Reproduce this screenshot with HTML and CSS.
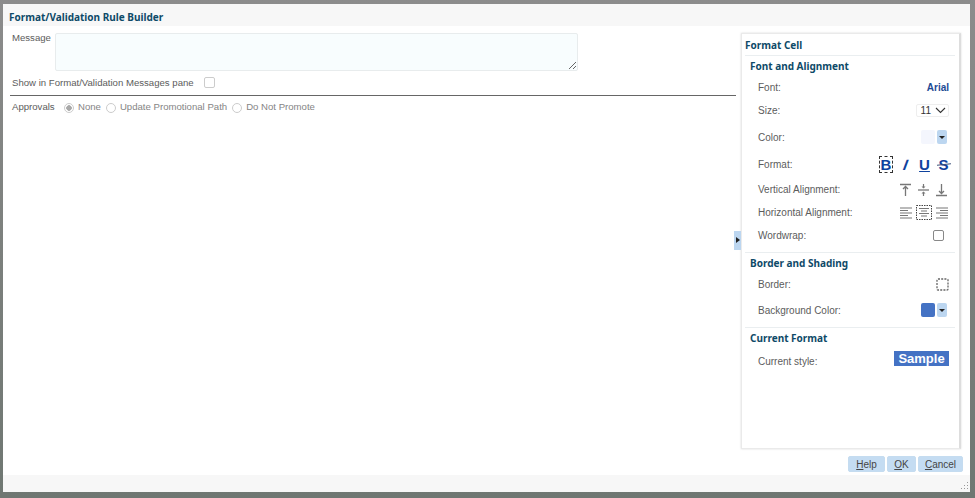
FILE: index.html
```html
<!DOCTYPE html>
<html lang="en">
<head>
    <meta charset="UTF-8">
    <title>Format/Validation Rule Builder</title>
    <link rel="stylesheet" href="styles.css">
</head>
<body>
    <div class="dialog">
        <div class="title-bar">Format/Validation Rule Builder</div>

        <div class="dialog-body">
            <div class="rule-form">
                <div class="message-row">
                    <label class="message-label">Message</label>
                    <div class="message-box">
                        <svg class="grip" width="9" height="9" viewBox="0 0 9 9">
                            <path d="M1 8 L8 1 M5 8 L8 5" stroke="#666" stroke-width="1" fill="none"/>
                        </svg>
                    </div>
                </div>
                <div class="pane-row">
                    <span>Show in Format/Validation Messages pane</span>
                    <span class="check check-muted"></span>
                </div>
                <div class="approvals-row">
                    <span class="approvals-label">Approvals</span>
                    <span class="radio radio-on"></span><span class="muted radio-text">None</span>
                    <span class="radio"></span><span class="muted radio-text">Update Promotional Path</span>
                    <span class="radio"></span><span class="muted">Do Not Promote</span>
                </div>
            </div>

            <div class="collapse-handle"></div>

            <div class="format-panel">
                <h2 class="panel-title">Format Cell</h2>

                <div class="section section-font">
                    <h3>Font and Alignment</h3>
                    <div class="row row-font">
                        <span>Font:</span>
                        <span class="font-name">Arial</span>
                    </div>
                    <div class="row row-size">
                        <span>Size:</span>
                        <span class="size-select">11
                            <svg width="11" height="7" viewBox="0 0 11 7"><path d="M1 1 L5.5 5.5 L10 1" stroke="#333" stroke-width="1.1" fill="none"/></svg>
                        </span>
                    </div>
                    <div class="row row-color">
                        <span>Color:</span>
                        <span class="color-pick">
                            <span class="swatch swatch-white"></span>
                            <span class="drop"></span>
                        </span>
                    </div>
                    <div class="row row-format">
                        <span>Format:</span>
                        <span class="icons icons-format">
                            <span class="fmt fmt-b">B</span>
                            <span class="fmt fmt-i">I</span>
                            <span class="fmt fmt-u">U</span>
                            <span class="fmt fmt-s">S</span>
                        </span>
                    </div>
                    <div class="row row-valign">
                        <span>Vertical Alignment:</span>
                        <span class="icons">
                            <svg width="13" height="14" viewBox="0 0 13 14"><path d="M1 1.5 H12 M6.5 13 V3 M4 6 L6.5 3.5 L9 6" stroke="#777" stroke-width="1.3" fill="none"/></svg>
                            <svg width="13" height="14" viewBox="0 0 13 14"><path d="M1 7 H12" stroke="#777" stroke-width="1.3"/><path d="M6.5 1 V5 M6.5 9 V13" stroke="#777" stroke-width="1.2"/><path d="M4.5 3.5 L6.5 5.5 L8.5 3.5 Z M4.5 10.5 L6.5 8.5 L8.5 10.5 Z" fill="#777"/></svg>
                            <svg width="13" height="14" viewBox="0 0 13 14"><path d="M1 12.5 H12 M6.5 1 V11 M4 8 L6.5 10.5 L9 8" stroke="#777" stroke-width="1.3" fill="none"/></svg>
                        </span>
                    </div>
                    <div class="row row-halign">
                        <span>Horizontal Alignment:</span>
                        <span class="icons icons-halign">
                            <svg width="14" height="14" viewBox="0 0 14 14"><path d="M1 2 H13 M1 4.5 H9 M1 7 H13 M1 9.5 H9 M1 12 H13" stroke="#777" stroke-width="1.2"/></svg>
                            <svg width="16" height="15" viewBox="0 0 16 15"><rect x="0.5" y="0.5" width="15" height="14" fill="none" stroke="#444" stroke-dasharray="1.5 1"/><path d="M3 3.5 H13 M5 6 H11 M3 8.5 H13 M5 11 H11" stroke="#777" stroke-width="1.2"/></svg>
                            <svg width="14" height="14" viewBox="0 0 14 14"><path d="M1 2 H13 M5 4.5 H13 M1 7 H13 M5 9.5 H13 M1 12 H13" stroke="#777" stroke-width="1.2"/></svg>
                        </span>
                    </div>
                    <div class="row row-wrap">
                        <span>Wordwrap:</span>
                        <span class="check"></span>
                    </div>
                </div>

                <div class="section section-border">
                    <h3>Border and Shading</h3>
                    <div class="row row-border">
                        <span>Border:</span>
                        <svg width="13" height="13" viewBox="0 0 13 13"><rect x="1" y="1" width="11" height="11" rx="1" fill="none" stroke="#666" stroke-width="1.3" stroke-dasharray="2 1.2"/></svg>
                    </div>
                    <div class="row row-bg">
                        <span>Background Color:</span>
                        <span class="color-pick">
                            <span class="swatch swatch-blue"></span>
                            <span class="drop"></span>
                        </span>
                    </div>
                </div>

                <div class="section">
                    <h3>Current Format</h3>
                    <div class="row row-style">
                        <span>Current style:</span>
                        <span class="sample">Sample</span>
                    </div>
                </div>
            </div>
        </div>

        <div class="button-row">
            <button class="btn btn-help"><u>H</u>elp</button>
            <button class="btn btn-ok"><u>O</u>K</button>
            <button class="btn btn-cancel"><u>C</u>ancel</button>
        </div>

        <div class="status-bar">
            <svg class="resize-grip" width="10" height="10" viewBox="0 0 10 10">
                <path d="M8 1h1v1H8z M5 4h1v1H5z M8 4h1v1H8z M2 7h1v1H2z M5 7h1v1H5z M8 7h1v1H8z" fill="#999"/>
            </svg>
        </div>
    </div>
</body>
</html>
```

FILE: styles.css
```css
* {
    margin: 0;
    padding: 0;
    box-sizing: border-box;
}

body {
    width: 975px;
    height: 498px;
    overflow: hidden;
    background: linear-gradient(#8c8c8c 0%, #7c807d 50%, #6f7772 100%);
    font-family: 'Liberation Sans', 'DejaVu Sans', sans-serif;
    font-size: 10px;
    color: #5c5c5c;
    padding: 4px 5px 6px 3px;
}

.dialog {
    height: 488px;
    background: white;
    display: flex;
    flex-direction: column;
    position: relative;
}

.title-bar {
    height: 22px;
    line-height: 26px;
    padding-left: 6px;
    background: #f7f7f7;
    color: #0e4a68;
    font-family: 'Noto Sans', sans-serif;
    font-weight: bold;
    flex: none;
}

.dialog-body {
    flex: none;
    height: 422px;
    display: flex;
    position: relative;
}

.rule-form {
    width: 738px;
    padding: 7px 0 0 9px;
    flex: none;
    font-size: 9.6px;
}

.message-row {
    display: flex;
}

.message-label {
    width: 43px;
    line-height: 10px;
}

.message-box {
    width: 523px;
    height: 38px;
    background: #f8fdfe;
    border: 1px solid #e8eced;
    border-radius: 2px;
    position: relative;
}

.grip {
    position: absolute;
    right: 0;
    bottom: 0;
}

.pane-row {
    display: flex;
    align-items: center;
    gap: 10px;
    height: 25px;
    border-bottom: 1px solid #666;
    width: 726px;
    margin-left: -2px;
    padding-left: 2px;
    padding-bottom: 2px;
}

.approvals-row {
    display: flex;
    align-items: center;
    height: 20px;
}

.approvals-label {
    width: 52px;
}

.muted {
    color: #858585;
}

.radio {
    width: 10px;
    height: 10px;
    border: 1px solid #ccc;
    border-radius: 50%;
    background: white;
    margin-top: 3px;
    margin-right: 4px;
    flex: none;
}

.radio-on {
    background: radial-gradient(circle, #a9a9a9 0 2.5px, white 3px);
}

.radio-text {
    margin-right: 5px;
}

.check {
    width: 11px;
    height: 11px;
    border: 1px solid #888;
    border-radius: 2px;
    background: white;
    display: block;
}

.check-muted {
    border-color: #ccc;
}

.collapse-handle {
    position: absolute;
    left: 731px;
    top: 205px;
    width: 7px;
    height: 19px;
    background: #bcd6f0;
}

.collapse-handle::after {
    content: '';
    position: absolute;
    left: 2px;
    top: 6px;
    border-left: 4px solid #222;
    border-top: 3.5px solid transparent;
    border-bottom: 3.5px solid transparent;
}

.format-panel {
    width: 220px;
    height: 416px;
    margin-top: 7px;
    background: white;
    border: 1px solid #eaeaea;
    border-right: 2px solid #ddd;
    box-shadow: 0 0 2px rgba(0,0,0,0.15);
    padding: 0 9px 0 3px;
    font-size: 10px;
}

.panel-title,
.section h3 {
    font-family: 'Noto Sans', sans-serif;
    font-size: 10px;
    font-weight: bold;
    color: #0e4a68;
}

.panel-title {
    height: 22px;
    line-height: 23px;
    border-bottom: 1px solid #eaeef0;
    margin-right: -5px;
}

.section {
    border-bottom: 1px solid #eaeef0;
    padding-left: 5px;
    margin-right: -5px;
    padding-right: 6px;
}

.section:last-child {
    border-bottom: none;
}

.section-font {
    padding-bottom: 4px;
}

.section-border {
    padding-bottom: 3px;
}

.section h3 {
    height: 19px;
    line-height: 20px;
}

.row {
    display: flex;
    justify-content: space-between;
    align-items: center;
    padding-left: 8px;
}

.row-font { height: 24px; }
.row-size { height: 22px; }
.row-color { height: 30px; margin-top: 1px; }
.row-format { height: 25px; }
.row-valign { height: 25px; }
.row-halign { height: 21px; }
.row-wrap { height: 25px; padding-right: 5px; }
.row-border { height: 24px; }
.row-bg { height: 28px; }
.row-style { height: 28px; }

.font-name {
    color: #1d4a94;
    font-weight: bold;
}

.size-select {
    display: flex;
    align-items: center;
    gap: 4px;
    color: #333;
    border: 1px solid #eee;
    border-radius: 2px;
    padding: 0 2px 0 4px;
    height: 13px;
}

.color-pick {
    display: flex;
    gap: 2px;
    margin-right: 2px;
}

.swatch {
    width: 14px;
    height: 14px;
    border-radius: 2px;
}

.swatch-white {
    background: #f4f6fd;
}

.swatch-blue {
    background: #4472c4;
}

.drop {
    width: 10px;
    height: 14px;
    background: #bcd6f0;
    border-radius: 2px;
    position: relative;
}

.drop::after {
    content: '';
    position: absolute;
    left: 2px;
    top: 6px;
    border-top: 3px solid #222;
    border-left: 3px solid transparent;
    border-right: 3px solid transparent;
}

.icons {
    display: flex;
    align-items: center;
    gap: 5px;
    margin-right: 1px;
}

.icons-halign {
    gap: 3px;
    margin-right: 0;
}

.icons-format {
    gap: 8px;
    margin-right: 0;
}

.fmt {
    font-family: 'Liberation Sans', sans-serif;
    font-size: 15px;
    font-weight: bold;
    color: #0f429e;
    line-height: 15px;
    width: 11px;
    text-align: center;
    position: relative;
}

.fmt-b {
    width: 14px;
    border: 1px dashed #333;
    margin-right: -1px;
}

.fmt-i {
    font-style: italic;
    transform: skewX(-10deg);
}

.fmt-u {
    text-decoration: underline;
}

.fmt-s::after {
    content: '';
    position: absolute;
    left: -1px;
    right: -2px;
    top: 7px;
    height: 1px;
    background: #3a4f78;
    transform: rotate(-6deg);
}

.sample {
    width: 55px;
    height: 15px;
    background: #4472c4;
    color: white;
    font-family: 'Liberation Sans', sans-serif;
    font-size: 13px;
    font-weight: bold;
    line-height: 15px;
    text-align: center;
    margin-bottom: 6px;
}

.button-row {
    position: absolute;
    right: 7px;
    top: 452px;
    display: flex;
    gap: 2px;
}

.btn {
    height: 16px;
    border: 1px solid #c5dcf0;
    border-radius: 2px;
    background: #c4dcf2;
    color: #444;
    font-family: 'Liberation Sans', sans-serif;
    font-size: 10px;
    line-height: 13px;
}

.btn-help { width: 37px; }
.btn-ok { width: 29px; }
.btn-cancel { width: 45px; }

.status-bar {
    flex: 1;
    margin-top: 27px;
    background: #f7f7f7;
    position: relative;
}

.resize-grip {
    position: absolute;
    right: 1px;
    bottom: 1px;
}
```
